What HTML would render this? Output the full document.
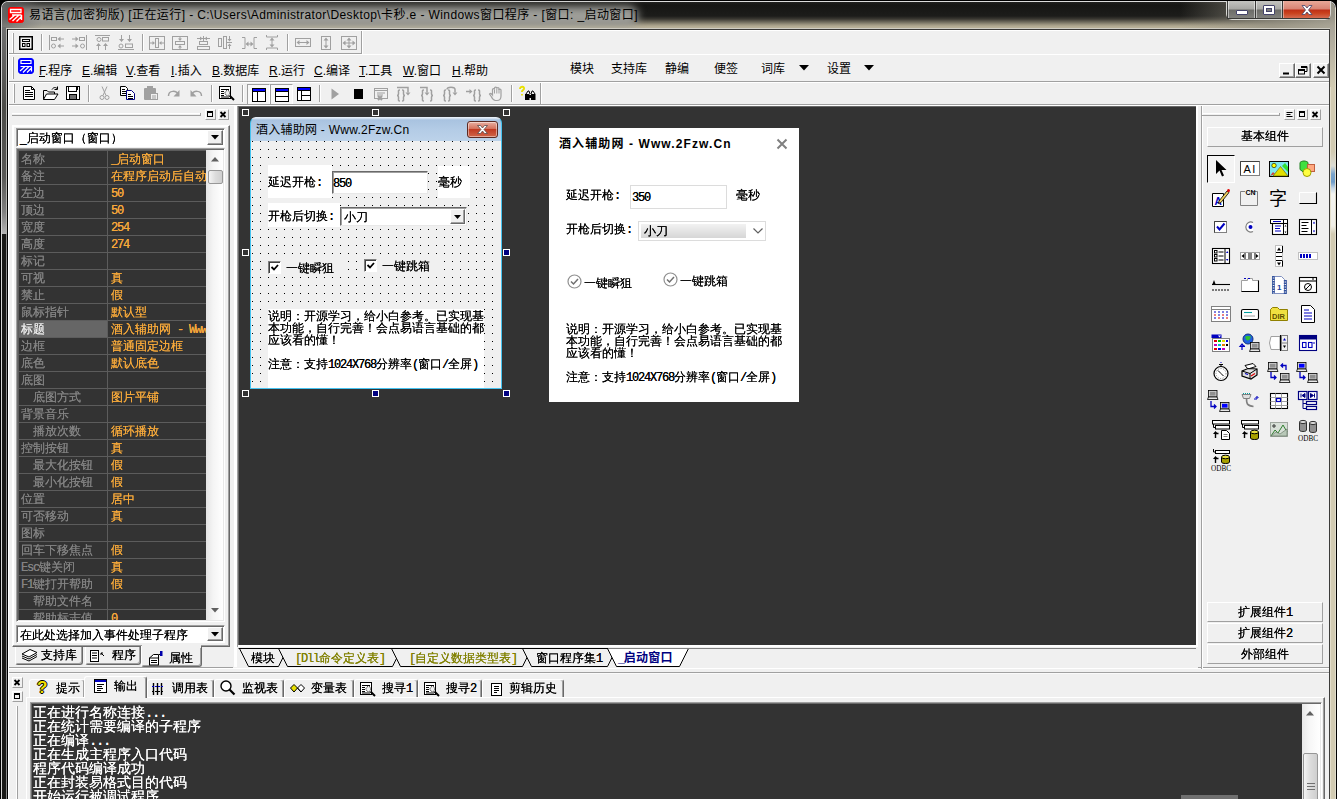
<!DOCTYPE html><html lang="zh"><head><meta charset="utf-8"><title>易语言</title><style>
*{box-sizing:border-box;margin:0;padding:0}
html,body{width:1337px;height:799px;overflow:hidden;background:#f0f0f0}
body{position:relative;font-family:"Liberation Sans","WenQuanYi Zen Hei","Noto Sans CJK SC",sans-serif;font-size:12px;color:#000;line-height:1}
.a{position:absolute}
.ui{font-family:"Liberation Sans","Noto Sans CJK SC",sans-serif}
.ss{font-family:"Liberation Sans","WenQuanYi Zen Hei","Noto Sans CJK SC",sans-serif}
.mono{font-family:"Liberation Sans","WenQuanYi Zen Hei","Noto Sans CJK SC",sans-serif;text-shadow:0 0 0 currentColor}
.ss{text-shadow:0 0 0 currentColor}
.l{font-family:"Liberation Mono",monospace;letter-spacing:-1.2px}
.raised{border:1px solid;border-color:#fff #a0a0a0 #a0a0a0 #fff;background:#f0f0f0}
.raised2{border:1px solid;border-color:#fff #696969 #696969 #fff;box-shadow:inset -1px -1px 0 #a0a0a0;background:#f0f0f0}
.sunken{border:1px solid;border-color:#a0a0a0 #fff #fff #a0a0a0}
.sunken2{border:1px solid;border-color:#a0a0a0 #fff #fff #a0a0a0;box-shadow:inset 1px 1px 0 #696969}
.hl{background:#a0a0a0;height:1px}
.wl{background:#fff;height:1px}
.vl{background:#a0a0a0;width:1px}
.vw{background:#fff;width:1px}
.t{white-space:nowrap;line-height:14px;height:14px}
svg{position:absolute;overflow:visible}
</style></head><body>
<div class="a " style="left:0px;top:0px;width:1337px;height:799px;background:#000"></div>
<div class="a " style="left:0px;top:0px;width:1337px;height:40px;background:#000;border-radius:8px 8px 0 0"></div>
<div class="a " style="left:1px;top:1px;width:1335px;height:40px;background:#dcdcdc;border-radius:7px 7px 0 0"></div>
<div class="a " style="left:2px;top:2px;width:1333px;height:40px;border-radius:6px 6px 0 0;background:linear-gradient(to bottom,#20201e 0,#161614 3px,#1c1c1a 14px,#3a3832 17px,#6e6a5c 20px,#a39c86 23px,#b8b098 25px,#b8b098 26px)"></div>
<div class="a " style="left:12px;top:6px;width:626px;height:21px;background:#9e9e99;border-radius:9px;filter:blur(4px)"></div>
<div class="a " style="left:2px;top:2px;width:40px;height:26px;background:linear-gradient(to right,rgba(112,112,112,.9),rgba(112,112,112,0));border-radius:6px 0 0 0"></div>
<div class="a " style="left:1180px;top:2px;width:155px;height:26px;background:linear-gradient(to right,rgba(120,118,108,0),rgba(150,146,132,.75) 60%,rgba(168,164,150,.9));border-radius:0 6px 0 0"></div>
<div class="a " style="left:6px;top:28px;width:1325px;height:1px;background:#cfcdc4"></div>
<div class="a " style="left:7px;top:29px;width:1323px;height:1px;background:#3c3c3a"></div>
<div class="a " style="left:0px;top:8px;width:2px;height:791px;background:linear-gradient(to right,#000 0,#000 1px,#d4d4d4 1px)"></div>
<div class="a " style="left:2px;top:29px;width:6px;height:770px;background:linear-gradient(to right,#4c4c48 0,#4c4c48 4px,#b4b4b0 4px,#b4b4b0 5px,#000 5px)"></div>
<div class="a " style="left:2px;top:27px;width:4px;height:207px;background:linear-gradient(to bottom,#707070 0,#4c4c48 80px,#585856 150px,#808080 185px,#b4b4b4 207px)"></div>
<div class="a " style="left:2px;top:234px;width:4px;height:565px;background:#181816"></div>
<div class="a " style="left:6px;top:234px;width:1px;height:565px;background:#8c8c8c"></div>
<div class="a " style="left:8px;top:30px;width:1px;height:769px;background:#fff;z-index:5"></div>
<div class="a " style="left:1335px;top:8px;width:2px;height:791px;background:linear-gradient(to right,#e0dccc 0,#e0dccc 1px,#000 1px)"></div>
<div class="a " style="left:1329px;top:29px;width:6px;height:770px;background:linear-gradient(to right,#3c3c3a 0,#3c3c3a 1px,#e4dfcc 1px,#e4dfcc 2px,#d2cbb2 2px)"></div>
<div class="a " style="left:1330px;top:27px;width:5px;height:60px;background:linear-gradient(to bottom,#a8a498,#d2cbb2)"></div>
<svg style="left:8px;top:7px" width="16" height="16" viewBox="0 0 16 16"><rect x="0.500" y="0.500" width="15" height="15" rx="2" fill="#f00" stroke="#f00"/><path d="M2.500 2.500h10.500v3h-10.500z" stroke="#fff" stroke-width="1.300" fill="none"/><path d="M4 8h9.500M1.500 12.500l6-5M4.500 14l6-5.500M8.500 14.500l5-5M13.500 8v5" stroke="#fff" stroke-width="1.400" fill="none"/></svg>
<div class="a t ui" style="left:29px;top:7px;font-size:12px;line-height:16px;height:16px;color:#000;letter-spacing:0.40px">易语言(加密狗版) [正在运行] - C:\Users\Administrator\Desktop\卡秒.e - Windows窗口程序 - [窗口: _启动窗口]</div>
<div class="a " style="left:1226px;top:1px;width:105px;height:19px;border:1px solid #d8d8d4;border-top:none;border-radius:0 0 6px 6px;background:#3a3a38"></div>
<div class="a " style="left:1227px;top:1px;width:103px;height:18px;border-radius:0 0 5px 5px;background:linear-gradient(to bottom,#c4c4c0 0,#a8a8a4 8px,#6c6c68 9px,#80807c 17px)"></div>
<div class="a " style="left:1283px;top:1px;width:47px;height:18px;border-radius:0 0 5px 0;background:linear-gradient(to bottom,#e8a898 0,#d88474 8px,#be3018 9px,#c8401c 12px,#d46a50 17px)"></div>
<div class="a " style="left:1227px;top:1px;width:1px;height:18px;background:#3a3a38"></div>
<div class="a " style="left:1228px;top:1px;width:1px;height:17px;background:rgba(255,255,255,.5)"></div>
<div class="a " style="left:1254px;top:1px;width:1px;height:18px;background:rgba(255,255,255,.5)"></div>
<div class="a " style="left:1255px;top:1px;width:1px;height:18px;background:#3a3a38"></div>
<div class="a " style="left:1256px;top:1px;width:1px;height:18px;background:rgba(255,255,255,.5)"></div>
<div class="a " style="left:1281px;top:1px;width:1px;height:18px;background:rgba(255,255,255,.5)"></div>
<div class="a " style="left:1282px;top:1px;width:1px;height:18px;background:#3a3a38"></div>
<div class="a " style="left:1283px;top:1px;width:1px;height:18px;background:rgba(255,255,255,.4)"></div>
<div class="a " style="left:1227px;top:18px;width:103px;height:1px;background:#3a3a38;border-radius:0 0 5px 5px"></div>
<div class="a " style="left:1236px;top:10px;width:12px;height:5px;background:#fff;border:1px solid #44446a;border-radius:1px"></div>
<div class="a " style="left:1263px;top:5px;width:12px;height:10px;background:#fff;border:1px solid #44446a;border-radius:1px"></div>
<div class="a " style="left:1266px;top:8px;width:6px;height:4px;background:#80807c;border:1px solid #44446a"></div>
<svg style="left:1301px;top:5px" width="12" height="10" viewBox="0 0 12 10"><path d="M1 0.500h3l2 2.500 2-2.500h3l-3.500 4.500 3.500 4.500h-3l-2-2.500-2 2.500h-3l3.500-4.500z" fill="#fff" stroke="#44446a" stroke-width="0.800"/></svg>
<div class="a " style="left:8px;top:30px;width:1321px;height:769px;background:#f0f0f0"></div>
<div class="a " style="left:8px;top:30px;width:1321px;height:1px;background:#fff"></div>
<div class="a " style="left:8px;top:53px;width:354px;height:1px;background:#a0a0a0"></div>
<div class="a " style="left:8px;top:54px;width:1321px;height:1px;background:#fff"></div>
<div class="a " style="left:361px;top:31px;width:1px;height:23px;background:#a0a0a0"></div>
<div class="a " style="left:362px;top:31px;width:1px;height:23px;background:#fff"></div>
<div class="a " style="left:12px;top:33px;width:1px;height:20px;background:#fff"></div>
<div class="a " style="left:13px;top:33px;width:1px;height:20px;background:#a0a0a0"></div>
<svg style="left:19px;top:36px" width="14" height="14" viewBox="0 0 14 14"><rect x="0.750" y="0.750" width="12.500" height="12.500" fill="none" stroke="#000" stroke-width="1.500"/><rect x="3.5" y="3.5" width="7" height="2" fill="none" stroke="#000"/><rect x="3.5" y="7.5" width="2.5" height="3" fill="none" stroke="#000"/><rect x="8" y="7.5" width="2.5" height="3" fill="none" stroke="#000"/></svg>
<div class="a " style="left:41px;top:34px;width:1px;height:17px;background:#a0a0a0"></div>
<div class="a " style="left:42px;top:34px;width:1px;height:17px;background:#fff"></div>
<svg style="left:48px;top:34px" width="18" height="18" viewBox="0 0 18 18"><g fill="none" stroke="#a0a0a0" stroke-width="1"><path d="M1.500 1v15"/><rect x="3.500" y="3.500" width="5" height="3"/><circle cx="5.500" cy="12" r="2"/><path d="M11 5h5M11 12h5"/><path fill="#a0a0a0" stroke="none" d="M9.500 5l3-2.500v5zM9.500 12l3-2.500v5z"/></g></svg>
<svg style="left:70px;top:34px" width="18" height="18" viewBox="0 0 18 18"><g fill="none" stroke="#a0a0a0" stroke-width="1"><path d="M16.500 1v15"/><rect x="9.500" y="3.500" width="5" height="3"/><circle cx="12.500" cy="12" r="2"/><path d="M2 5h5M2 12h5"/><path fill="#a0a0a0" stroke="none" d="M8.500 5l-3-2.500v5zM8.500 12l-3-2.500v5z"/></g></svg>
<svg style="left:94px;top:34px" width="18" height="18" viewBox="0 0 18 18"><g fill="none" stroke="#a0a0a0" stroke-width="1"><path d="M1 1.500h15"/><circle cx="5" cy="5.500" r="2"/><rect x="8.500" y="3.500" width="6" height="3.500"/><path d="M4.500 16v-5M11.500 16v-5"/><path fill="#a0a0a0" stroke="none" d="M4.500 9l-2.500 3h5zM11.500 9l-2.500 3h5z"/></g></svg>
<svg style="left:117px;top:34px" width="18" height="18" viewBox="0 0 18 18"><g fill="none" stroke="#a0a0a0" stroke-width="1"><path d="M1 15.500h16"/><circle cx="4" cy="12" r="2"/><rect x="8.500" y="10" width="7" height="3.500"/><path d="M4.500 1v5M12.500 1v5"/><path fill="#a0a0a0" stroke="none" d="M4.500 8l-2.500-3h5zM12.500 8l-2.500-3h5z"/></g></svg>
<div class="a " style="left:142px;top:34px;width:1px;height:17px;background:#a0a0a0"></div>
<div class="a " style="left:143px;top:34px;width:1px;height:17px;background:#fff"></div>
<svg style="left:148px;top:34px" width="18" height="18" viewBox="0 0 18 18"><g fill="none" stroke="#a0a0a0" stroke-width="1"><rect x="1.500" y="2.500" width="15" height="13"/><rect x="7.500" y="4.500" width="3" height="9"/><path d="M2 9h3M16 9h-3"/><path fill="#a0a0a0" stroke="none" d="M7 9l-2.500-2v4zM11 9l2.500-2v4z"/></g></svg>
<svg style="left:171px;top:34px" width="18" height="18" viewBox="0 0 18 18"><g fill="none" stroke="#a0a0a0" stroke-width="1"><rect x="1.500" y="2.500" width="15" height="13"/><rect x="4.500" y="7.500" width="9" height="3"/><path d="M9 3v2M9 15v-2"/><path fill="#a0a0a0" stroke="none" d="M9 7l-2-2.500h4zM9 11l-2 2.500h4z"/></g></svg>
<svg style="left:195px;top:34px" width="18" height="18" viewBox="0 0 18 18"><g fill="none" stroke="#a0a0a0" stroke-width="1"><path d="M2 4.500h13M8.500 2v5"/><path fill="#a0a0a0" stroke="none" d="M7.500 4.500l-2.500-2v4zM9.500 4.500l2.500-2v4z"/><rect x="4.500" y="7.500" width="8" height="3"/><rect x="2.500" y="12.500" width="12" height="3"/></g></svg>
<svg style="left:217px;top:34px" width="18" height="18" viewBox="0 0 18 18"><g fill="none" stroke="#a0a0a0" stroke-width="1"><rect x="1.500" y="4.500" width="3" height="8"/><rect x="6.500" y="2.500" width="3" height="12"/><path d="M10 8.500h5M12.500 2v4M12.500 15v-4"/><path fill="#a0a0a0" stroke="none" d="M12.500 7.500l-2-2.500h4zM12.500 9.500l-2 2.500h4z"/></g></svg>
<svg style="left:241px;top:34px" width="18" height="18" viewBox="0 0 18 18"><g fill="none" stroke="#a0a0a0" stroke-width="1"><path d="M1 3.500h3v11h-3M16 3.500h-3v11h3M6 10h5"/><path fill="#a0a0a0" stroke="none" d="M4.500 10l3-2.500v5zM12.500 10l-3-2.500v5z"/></g></svg>
<svg style="left:264px;top:34px" width="18" height="18" viewBox="0 0 18 18"><g fill="none" stroke="#a0a0a0" stroke-width="1"><path d="M2.500 1v2h11v-2M2.500 16v-2h11v2M8 5v7"/><path fill="#a0a0a0" stroke="none" d="M8 3.500l-2.500 3h5zM8 13.500l-2.500-3h5z"/></g></svg>
<div class="a " style="left:287px;top:34px;width:1px;height:17px;background:#a0a0a0"></div>
<div class="a " style="left:288px;top:34px;width:1px;height:17px;background:#fff"></div>
<svg style="left:294px;top:34px" width="18" height="18" viewBox="0 0 18 18"><g fill="none" stroke="#a0a0a0" stroke-width="1"><rect x="1.500" y="4.500" width="15" height="8"/><path d="M5 8.500h8"/><path fill="#a0a0a0" stroke="none" d="M2.500 8.500l3-2.500v5zM15.500 8.500l-3-2.500v5z"/></g></svg>
<svg style="left:317px;top:34px" width="18" height="18" viewBox="0 0 18 18"><g fill="none" stroke="#a0a0a0" stroke-width="1"><rect x="4.500" y="2.500" width="9" height="13"/><path d="M9 6v6"/><path fill="#a0a0a0" stroke="none" d="M9 3.500l-2.500 3h5zM9 14.500l-2.500-3h5z"/></g></svg>
<svg style="left:340px;top:34px" width="18" height="18" viewBox="0 0 18 18"><g fill="none" stroke="#a0a0a0" stroke-width="1"><rect x="1.500" y="2.500" width="15" height="13"/><path d="M5 9h8M9 5v8"/><path fill="#a0a0a0" stroke="none" d="M2.500 9l3-2.500v5zM15.500 9l-3-2.500v5zM9 3.500l-2.500 3h5zM9 14.500l-2.500-3h5z"/></g></svg>
<div class="a " style="left:8px;top:81px;width:1321px;height:1px;background:#a0a0a0"></div>
<div class="a " style="left:8px;top:82px;width:1321px;height:1px;background:#fff"></div>
<div class="a " style="left:12px;top:57px;width:1px;height:22px;background:#fff"></div>
<div class="a " style="left:13px;top:57px;width:1px;height:22px;background:#a0a0a0"></div>
<svg style="left:18px;top:58px" width="16" height="16" viewBox="0 0 16 16"><rect x="0.500" y="0.500" width="15" height="15" rx="2.500" fill="#00f" stroke="#00f"/><path d="M3 2.500h10v3h-10zM2.500 8.500h11M2 13l5-4.500M5 14.500l6-6M9 14.500l4.500-4.500M13.500 8.500v5" stroke="#fff" stroke-width="1.200" fill="none"/></svg>
<div class="a t ui" style="left:39px;top:63px;font-size:12px;line-height:16px;height:16px"><u>F</u>.程序</div>
<div class="a t ui" style="left:82px;top:63px;font-size:12px;line-height:16px;height:16px"><u>E</u>.编辑</div>
<div class="a t ui" style="left:126px;top:63px;font-size:12px;line-height:16px;height:16px"><u>V</u>.查看</div>
<div class="a t ui" style="left:171px;top:63px;font-size:12px;line-height:16px;height:16px"><u>I</u>.插入</div>
<div class="a t ui" style="left:212px;top:63px;font-size:12px;line-height:16px;height:16px"><u>B</u>.数据库</div>
<div class="a t ui" style="left:269px;top:63px;font-size:12px;line-height:16px;height:16px"><u>R</u>.运行</div>
<div class="a t ui" style="left:314px;top:63px;font-size:12px;line-height:16px;height:16px"><u>C</u>.编译</div>
<div class="a t ui" style="left:359px;top:63px;font-size:12px;line-height:16px;height:16px"><u>T</u>.工具</div>
<div class="a t ui" style="left:403px;top:63px;font-size:12px;line-height:16px;height:16px"><u>W</u>.窗口</div>
<div class="a t ui" style="left:452px;top:63px;font-size:12px;line-height:16px;height:16px"><u>H</u>.帮助</div>
<div class="a t ui" style="left:570px;top:61px;font-size:12px;line-height:16px;height:16px">模块</div>
<div class="a t ui" style="left:611px;top:61px;font-size:12px;line-height:16px;height:16px">支持库</div>
<div class="a t ui" style="left:665px;top:61px;font-size:12px;line-height:16px;height:16px">静编</div>
<div class="a t ui" style="left:714px;top:61px;font-size:12px;line-height:16px;height:16px">便签</div>
<div class="a t ui" style="left:761px;top:61px;font-size:12px;line-height:16px;height:16px">词库</div>
<div class="a t ui" style="left:827px;top:61px;font-size:12px;line-height:16px;height:16px">设置</div>
<svg style="left:799px;top:65px" width="10" height="6" viewBox="0 0 10 6"><path d="M0 0h10l-5 5.500z" fill="#000"/></svg>
<svg style="left:864px;top:65px" width="10" height="6" viewBox="0 0 10 6"><path d="M0 0h10l-5 5.500z" fill="#000"/></svg>
<div class="a raised2" style="left:1279px;top:63px;width:16px;height:15px;"></div>
<svg style="left:1279px;top:63px" width="16" height="15" viewBox="0 0 16 15"><path d="M4 10.500h6" stroke="#000" stroke-width="2"/></svg>
<div class="a raised2" style="left:1295px;top:63px;width:16px;height:15px;"></div>
<svg style="left:1295px;top:63px" width="16" height="15" viewBox="0 0 16 15"><path d="M6 3.500h6v5h-2M6 4.500h6" stroke="#000" fill="none"/><rect x="3.500" y="6.500" width="6" height="4.500" fill="#f0f0f0" stroke="#000"/><path d="M3.500 7.500h6" stroke="#000"/></svg>
<div class="a raised2" style="left:1313px;top:63px;width:16px;height:15px;"></div>
<svg style="left:1313px;top:63px" width="16" height="15" viewBox="0 0 16 15"><path d="M4.500 3.500l7 7M11.500 3.500l-7 7" stroke="#000" stroke-width="2"/></svg>
<div class="a " style="left:8px;top:104px;width:1321px;height:1px;background:#a0a0a0"></div>
<div class="a " style="left:8px;top:105px;width:1321px;height:1px;background:#fff"></div>
<div class="a " style="left:540px;top:83px;width:1px;height:22px;background:#a0a0a0"></div>
<div class="a " style="left:541px;top:83px;width:1px;height:22px;background:#fff"></div>
<div class="a " style="left:13px;top:84px;width:1px;height:19px;background:#fff"></div>
<div class="a " style="left:14px;top:84px;width:1px;height:19px;background:#a0a0a0"></div>
<svg style="left:23px;top:86px" width="13" height="15" viewBox="0 0 13 15"><path d="M0.500 0.500h8l3 3v10h-11z" fill="#fff" stroke="#000"/><path d="M8.500 0.500v3h3" fill="none" stroke="#000" stroke-width="1"/><path d="M2 4.500h5M2 6.500h8M2 8.500h8M2 10.500h8" fill="none" stroke="#000" stroke-width="1"/></svg>
<svg style="left:43px;top:86px" width="16" height="15" viewBox="0 0 16 15"><path d="M0.500 13.500v-9h3.500l1.500 1.500h6v2.500" fill="none" stroke="#000" stroke-width="1"/><path d="M0.500 13.500l3-5.500h11.500l-3.500 5.500z" fill="#fff" stroke="#000"/><path d="M9 3.500c1.500-2.500 4-2.500 5.500-0.500M14.500 0.500v3h-3" fill="none" stroke="#000" stroke-width="1"/></svg>
<svg style="left:66px;top:86px" width="15" height="15" viewBox="0 0 15 15"><rect x="0.500" y="0.500" width="13" height="13" fill="#fff" stroke="#000"/><rect x="2.500" y="0.500" width="8" height="5" fill="none" stroke="#000" stroke-width="1"/><rect x="3.500" y="8.500" width="7" height="5" fill="#707070" stroke="#000"/><path d="M11.500 1v3" fill="none" stroke="#000" stroke-width="1"/></svg>
<div class="a " style="left:88px;top:85px;width:1px;height:17px;background:#a0a0a0"></div>
<div class="a " style="left:89px;top:85px;width:1px;height:17px;background:#fff"></div>
<svg style="left:99px;top:86px" width="11" height="15" viewBox="0 0 11 15"><path d="M3 0.500l4 9M8 0.500l-4 9" stroke="#a0a0a0" fill="none"/><circle cx="3" cy="11.500" r="2" fill="none" stroke="#a0a0a0"/><circle cx="8" cy="11.500" r="2" fill="none" stroke="#a0a0a0"/></svg>
<svg style="left:120px;top:86px" width="16" height="15" viewBox="0 0 16 15"><path d="M0.500 0.500h5l2 2v7h-7z" fill="#fff" stroke="#000"/><path d="M2 3.500h3M2 5.500h4M2 7.500h4" fill="none" stroke="#000" stroke-width="1"/><path d="M6.500 4.500h5l3 3v6h-8z" fill="#fff" stroke="#000080"/><path d="M8 8.500h3M8 10.500h5M8 12.500h5" stroke="#000" fill="none"/></svg>
<svg style="left:143px;top:86px" width="16" height="15" viewBox="0 0 16 15"><rect x="1" y="2" width="12" height="12" rx="1" fill="#a0a0a0"/><rect x="4.500" y="0.500" width="5" height="3" fill="#a0a0a0" stroke="#a0a0a0"/><rect x="7.500" y="7.500" width="7" height="6" fill="#f0f0f0" stroke="#a0a0a0"/><path d="M9 10h4M9 12h4" stroke="#a0a0a0"/></svg>
<svg style="left:167px;top:88px" width="14" height="11" viewBox="0 0 14 11"><path d="M1.500 8c0-6 8-6 10-1" fill="none" stroke="#a0a0a0" stroke-width="1.500"/><path d="M12.500 2v6.500h-6z" fill="#a0a0a0"/></svg>
<svg style="left:189px;top:88px" width="14" height="11" viewBox="0 0 14 11"><path d="M12.500 8c0-6-8-6-10-1" fill="none" stroke="#a0a0a0" stroke-width="1.500"/><path d="M1.500 2v6.500h6z" fill="#a0a0a0"/></svg>
<div class="a " style="left:211px;top:85px;width:1px;height:17px;background:#a0a0a0"></div>
<div class="a " style="left:212px;top:85px;width:1px;height:17px;background:#fff"></div>
<svg style="left:219px;top:86px" width="17" height="15" viewBox="0 0 17 15"><rect x="0.500" y="0.500" width="11" height="12" fill="#fff" stroke="#000"/><path d="M2 3.500h8M2 5.500h3M2 7.500h3M2 9.500h3M2 11h8" fill="none" stroke="#000" stroke-width="1"/><circle cx="8.500" cy="7" r="2.500" fill="#f0f0f0" stroke="#000" stroke-dasharray="1 1"/><path d="M10.500 9.500l4.500 4.500" stroke="#000" stroke-width="2"/></svg>
<div class="a " style="left:242px;top:85px;width:1px;height:17px;background:#a0a0a0"></div>
<div class="a " style="left:243px;top:85px;width:1px;height:17px;background:#fff"></div>
<div class="a sunken" style="left:247px;top:84px;width:23px;height:21px;background:#f8f8f8"></div>
<div class="a sunken" style="left:270px;top:84px;width:23px;height:21px;background:#f8f8f8"></div>
<svg style="left:252px;top:88px" width="14" height="14" viewBox="0 0 14 14"><rect x="0.500" y="0.500" width="13" height="13" fill="#fff" stroke="#000"/><rect x="1" y="1" width="12" height="2" fill="#00f"/><path d="M1 3.500h12" stroke="#000"/><path d="M5.500 3.500v10" stroke="#000"/></svg>
<svg style="left:275px;top:88px" width="14" height="14" viewBox="0 0 14 14"><rect x="0.500" y="0.500" width="13" height="13" fill="#fff" stroke="#000"/><rect x="1" y="1" width="12" height="2" fill="#00f"/><path d="M1 3.500h12" stroke="#000"/><path d="M1 8.500h12" stroke="#000"/></svg>
<svg style="left:297px;top:87px" width="14" height="14" viewBox="0 0 14 14"><rect x="0.500" y="0.500" width="13" height="13" fill="#fff" stroke="#000"/><rect x="1" y="1" width="12" height="2" fill="#00f"/><path d="M1 3.500h12" stroke="#000"/><path d="M4.500 3.500v10M4.500 8.500h9" stroke="#000"/></svg>
<div class="a " style="left:319px;top:85px;width:1px;height:17px;background:#a0a0a0"></div>
<div class="a " style="left:320px;top:85px;width:1px;height:17px;background:#fff"></div>
<svg style="left:331px;top:88px" width="9" height="12" viewBox="0 0 9 12"><path d="M0.500 0.500l7.500 5.500-7.500 5.500z" fill="#a0a0a0"/></svg>
<div class="a " style="left:354px;top:89px;width:9px;height:10px;background:#000"></div>
<svg style="left:373px;top:87px" width="16" height="14" viewBox="0 0 16 14"><rect x="1.500" y="1.500" width="13" height="10" fill="none" stroke="#a0a0a0"/><path d="M1.500 3.500h13M4 6h8M4 8h6" stroke="#a0a0a0"/><path d="M5 9l4 4M9 9l-4 4" stroke="#a0a0a0" stroke-width="2"/></svg>
<svg style="left:396px;top:86px" width="16" height="15" viewBox="0 0 16 15"><g fill="none" stroke="#a0a0a0" stroke-width="1.500"><path d="M4 4c-2 0-1.500 1-1.500 2.500v1.500c0 1-0.500 1.500-1.500 1.500 1 0 1.500 0.500 1.500 1.500v1.500c0 1.500-0.500 2.500 1.500 2.500"/><path d="M6 4c2 0 1.500 1 1.500 2.500v1.500c0 1 0.500 1.500 1.500 1.500-1 0-1.500 0.500-1.500 1.500v1.500c0 1.500 0.500 2.500-1.500 2.500"/><path d="M1 1.500h11v5"/></g><g fill="#a0a0a0"><path d="M9.500 6.500h5l-2.500 3z"/></g></svg>
<svg style="left:420px;top:86px" width="16" height="15" viewBox="0 0 16 15"><g fill="none" stroke="#a0a0a0" stroke-width="1.500"><path d="M4 4c-2 0-1.500 1-1.500 2.500v1.500c0 1-0.500 1.500-1.500 1.500 1 0 1.500 0.500 1.500 1.500v1.500c0 1.500-0.500 2.500 1.500 2.500"/><path d="M10 4c2 0 1.500 1 1.500 2.500v1.500c0 1 0.500 1.500 1.500 1.500-1 0-1.500 0.500-1.500 1.500v1.500c0 1.500 0.500 2.500-1.500 2.500"/><path d="M0 1.500h7v5"/></g><g fill="#a0a0a0"><path d="M4.500 6.500h5l-2.500 3z"/></g></svg>
<svg style="left:442px;top:86px" width="16" height="15" viewBox="0 0 16 15"><g fill="none" stroke="#a0a0a0" stroke-width="1.500"><path d="M4 4c-2 0-1.500 1-1.500 2.500v1.500c0 1-0.500 1.500-1.500 1.500 1 0 1.500 0.500 1.500 1.500v1.500c0 1.500-0.500 2.500 1.500 2.500"/><path d="M6 4c2 0 1.500 1 1.500 2.500v1.500c0 1 0.500 1.500 1.500 1.500-1 0-1.500 0.500-1.500 1.500v1.500c0 1.500 0.500 2.500-1.500 2.500"/><path d="M5 3.500c0-3 8-3 8 0v3"/></g><g fill="#a0a0a0"><path d="M10.500 6.500h5l-2.500 3z"/></g></svg>
<svg style="left:466px;top:86px" width="16" height="15" viewBox="0 0 16 15"><g fill="none" stroke="#a0a0a0" stroke-width="1.500"><path d="M10 4c-2 0-1.500 1-1.500 2.500v1.500c0 1-0.500 1.500-1.500 1.500 1 0 1.500 0.500 1.500 1.500v1.500c0 1.500-0.500 2.500 1.500 2.500"/><path d="M12 4c2 0 1.500 1 1.500 2.500v1.500c0 1 0.500 1.500 1.500 1.500-1 0-1.500 0.500-1.500 1.500v1.500c0 1.500 0.500 2.500-1.500 2.500"/><path d="M0 5.500h4"/></g><g fill="#a0a0a0"><path d="M3.500 3l3 2.500-3 2.500z"/></g></svg>
<svg style="left:489px;top:86px" width="14" height="15" viewBox="0 0 14 15"><path d="M3.500 8.500v-5c0-1.300 2-1.300 2 0v-1.500c0-1.300 2.300-1.300 2.300 0v0.500c0-1.300 2.200-1.300 2.200 0v1.500c0-1.200 2-1.200 2 0v6c0 3-1.500 4.500-4 4.500h-1.500c-2 0-3-1.500-4.300-4l-1.700-2.500c0.800-1 2-0.500 3 1z" fill="none" stroke="#a0a0a0" stroke-width="1.200"/><path d="M5.500 3.500v4M7.800 2.500v5M10 3v4.500" stroke="#a0a0a0" fill="none"/></svg>
<div class="a " style="left:511px;top:85px;width:1px;height:17px;background:#a0a0a0"></div>
<div class="a " style="left:512px;top:85px;width:1px;height:17px;background:#fff"></div>
<svg style="left:519px;top:86px" width="17" height="15" viewBox="0 0 17 15"><path d="M1 3c0-3 5-3 4 0l-2 2v1M3 8v1.500" stroke="#e8e000" stroke-width="1.800" fill="none"/><path d="M7 8l2-3h1l1 3M12 8l1-3h1l2 3" stroke="#000" fill="none"/><rect x="6" y="8" width="4.500" height="6" fill="#000"/><rect x="12" y="8" width="4.500" height="6" fill="#000"/><rect x="10" y="9" width="2.500" height="3" fill="#000"/></svg>
<div class="a " style="left:12px;top:113px;width:189px;height:1px;background:#fff"></div>
<div class="a " style="left:12px;top:115px;width:189px;height:1px;background:#a0a0a0"></div>
<div class="a " style="left:200px;top:113px;width:1px;height:3px;background:#a0a0a0"></div>
<div class="a raised" style="left:205px;top:109px;width:11px;height:11px;"></div>
<svg style="left:205px;top:109px" width="11" height="11" viewBox="0 0 11 11"><rect x="2.500" y="2.500" width="5" height="5" fill="none" stroke="#000"/><rect x="2" y="2" width="6" height="2" fill="#000"/></svg>
<div class="a raised" style="left:218px;top:109px;width:11px;height:11px;"></div>
<svg style="left:218px;top:109px" width="11" height="11" viewBox="0 0 11 11"><path d="M2.500 3l5 5M7.500 3l-5 5" stroke="#000" stroke-width="1.800"/></svg>
<div class="a " style="left:12px;top:125px;width:218px;height:522px;border:1px solid;border-color:#fff #696969 #696969 #fff;box-shadow:inset -1px -1px 0 #a0a0a0,inset 1px 1px 0 #fff"></div>
<div class="a " style="left:234px;top:106px;width:3px;height:561px;background:#fff"></div>
<div class="a sunken2" style="left:16px;top:128px;width:209px;height:19px;background:#fff"></div>
<div class="a raised2" style="left:207px;top:130px;width:16px;height:15px;"></div>
<svg style="left:211px;top:135px" width="8" height="5" viewBox="0 0 8 5"><path d="M0 0h8l-4 4.500z" fill="#000"/></svg>
<div class="a t ss" style="left:20px;top:131px;">_启动窗口（窗口）</div>
<div class="a " style="left:16px;top:148px;width:209px;height:474px;background:#333;border:1px solid;border-color:#a0a0a0 #fff #fff #a0a0a0;box-shadow:inset 1px 1px 0 #696969,inset -1px -1px 0 #e8e8e8"></div>
<div class="a" style="left:18px;top:150px;width:188px;height:470px;overflow:hidden;background:#333">
<div class="a" style="left:0;top:0px;width:189px;height:1px;background:#5c5c5c"></div>
<div class="a t mono" style="left:1px;top:1px;width:88px;height:16px;line-height:16px;padding-left:2px;color:#828282;">名称</div>
<div class="a t mono" style="left:90px;top:1px;width:99px;height:16px;line-height:16px;padding-left:3px;color:#f5a83a;overflow:hidden;width:98px"><span class="l">_</span>启动窗口</div>
<div class="a" style="left:0;top:17px;width:189px;height:1px;background:#5c5c5c"></div>
<div class="a t mono" style="left:1px;top:18px;width:88px;height:16px;line-height:16px;padding-left:2px;color:#828282;">备注</div>
<div class="a t mono" style="left:90px;top:18px;width:99px;height:16px;line-height:16px;padding-left:3px;color:#f5a83a;overflow:hidden;width:98px">在程序启动后自动调入本窗口</div>
<div class="a" style="left:0;top:34px;width:189px;height:1px;background:#5c5c5c"></div>
<div class="a t mono" style="left:1px;top:35px;width:88px;height:16px;line-height:16px;padding-left:2px;color:#828282;">左边</div>
<div class="a t mono" style="left:90px;top:35px;width:99px;height:16px;line-height:16px;padding-left:3px;color:#f5a83a;overflow:hidden;width:98px"><span class="l">50</span></div>
<div class="a" style="left:0;top:51px;width:189px;height:1px;background:#5c5c5c"></div>
<div class="a t mono" style="left:1px;top:52px;width:88px;height:16px;line-height:16px;padding-left:2px;color:#828282;">顶边</div>
<div class="a t mono" style="left:90px;top:52px;width:99px;height:16px;line-height:16px;padding-left:3px;color:#f5a83a;overflow:hidden;width:98px"><span class="l">50</span></div>
<div class="a" style="left:0;top:68px;width:189px;height:1px;background:#5c5c5c"></div>
<div class="a t mono" style="left:1px;top:69px;width:88px;height:16px;line-height:16px;padding-left:2px;color:#828282;">宽度</div>
<div class="a t mono" style="left:90px;top:69px;width:99px;height:16px;line-height:16px;padding-left:3px;color:#f5a83a;overflow:hidden;width:98px"><span class="l">254</span></div>
<div class="a" style="left:0;top:85px;width:189px;height:1px;background:#5c5c5c"></div>
<div class="a t mono" style="left:1px;top:86px;width:88px;height:16px;line-height:16px;padding-left:2px;color:#828282;">高度</div>
<div class="a t mono" style="left:90px;top:86px;width:99px;height:16px;line-height:16px;padding-left:3px;color:#f5a83a;overflow:hidden;width:98px"><span class="l">274</span></div>
<div class="a" style="left:0;top:102px;width:189px;height:1px;background:#5c5c5c"></div>
<div class="a t mono" style="left:1px;top:103px;width:88px;height:16px;line-height:16px;padding-left:2px;color:#828282;">标记</div>
<div class="a t mono" style="left:90px;top:103px;width:99px;height:16px;line-height:16px;padding-left:3px;color:#f5a83a;overflow:hidden;width:98px"></div>
<div class="a" style="left:0;top:119px;width:189px;height:1px;background:#5c5c5c"></div>
<div class="a t mono" style="left:1px;top:120px;width:88px;height:16px;line-height:16px;padding-left:2px;color:#828282;">可视</div>
<div class="a t mono" style="left:90px;top:120px;width:99px;height:16px;line-height:16px;padding-left:3px;color:#f5a83a;overflow:hidden;width:98px">真</div>
<div class="a" style="left:0;top:136px;width:189px;height:1px;background:#5c5c5c"></div>
<div class="a t mono" style="left:1px;top:137px;width:88px;height:16px;line-height:16px;padding-left:2px;color:#828282;">禁止</div>
<div class="a t mono" style="left:90px;top:137px;width:99px;height:16px;line-height:16px;padding-left:3px;color:#f5a83a;overflow:hidden;width:98px">假</div>
<div class="a" style="left:0;top:153px;width:189px;height:1px;background:#5c5c5c"></div>
<div class="a t mono" style="left:1px;top:154px;width:88px;height:16px;line-height:16px;padding-left:2px;color:#828282;">鼠标指针</div>
<div class="a t mono" style="left:90px;top:154px;width:99px;height:16px;line-height:16px;padding-left:3px;color:#f5a83a;overflow:hidden;width:98px">默认型</div>
<div class="a" style="left:0;top:170px;width:189px;height:1px;background:#5c5c5c"></div>
<div class="a t mono" style="left:1px;top:171px;width:88px;height:16px;line-height:16px;padding-left:2px;background:#666;color:#e8e8e8;">标题</div>
<div class="a t mono" style="left:90px;top:171px;width:99px;height:16px;line-height:16px;padding-left:3px;color:#f5a83a;overflow:hidden;width:98px">酒入辅助网<span class="l"> - Www.2Fzw.Cn</span></div>
<div class="a" style="left:0;top:187px;width:189px;height:1px;background:#5c5c5c"></div>
<div class="a t mono" style="left:1px;top:188px;width:88px;height:16px;line-height:16px;padding-left:2px;color:#828282;">边框</div>
<div class="a t mono" style="left:90px;top:188px;width:99px;height:16px;line-height:16px;padding-left:3px;color:#f5a83a;overflow:hidden;width:98px">普通固定边框</div>
<div class="a" style="left:0;top:204px;width:189px;height:1px;background:#5c5c5c"></div>
<div class="a t mono" style="left:1px;top:205px;width:88px;height:16px;line-height:16px;padding-left:2px;color:#828282;">底色</div>
<div class="a t mono" style="left:90px;top:205px;width:99px;height:16px;line-height:16px;padding-left:3px;color:#f5a83a;overflow:hidden;width:98px">默认底色</div>
<div class="a" style="left:0;top:221px;width:189px;height:1px;background:#5c5c5c"></div>
<div class="a t mono" style="left:1px;top:222px;width:88px;height:16px;line-height:16px;padding-left:2px;color:#828282;">底图</div>
<div class="a t mono" style="left:90px;top:222px;width:99px;height:16px;line-height:16px;padding-left:3px;color:#f5a83a;overflow:hidden;width:98px"></div>
<div class="a" style="left:0;top:238px;width:189px;height:1px;background:#5c5c5c"></div>
<div class="a t mono" style="left:1px;top:239px;width:88px;height:16px;line-height:16px;padding-left:14px;color:#828282;">底图方式</div>
<div class="a t mono" style="left:90px;top:239px;width:99px;height:16px;line-height:16px;padding-left:3px;color:#f5a83a;overflow:hidden;width:98px">图片平铺</div>
<div class="a" style="left:0;top:255px;width:189px;height:1px;background:#5c5c5c"></div>
<div class="a t mono" style="left:1px;top:256px;width:88px;height:16px;line-height:16px;padding-left:2px;color:#828282;">背景音乐</div>
<div class="a t mono" style="left:90px;top:256px;width:99px;height:16px;line-height:16px;padding-left:3px;color:#f5a83a;overflow:hidden;width:98px"></div>
<div class="a" style="left:0;top:272px;width:189px;height:1px;background:#5c5c5c"></div>
<div class="a t mono" style="left:1px;top:273px;width:88px;height:16px;line-height:16px;padding-left:14px;color:#828282;">播放次数</div>
<div class="a t mono" style="left:90px;top:273px;width:99px;height:16px;line-height:16px;padding-left:3px;color:#f5a83a;overflow:hidden;width:98px">循环播放</div>
<div class="a" style="left:0;top:289px;width:189px;height:1px;background:#5c5c5c"></div>
<div class="a t mono" style="left:1px;top:290px;width:88px;height:16px;line-height:16px;padding-left:2px;color:#828282;">控制按钮</div>
<div class="a t mono" style="left:90px;top:290px;width:99px;height:16px;line-height:16px;padding-left:3px;color:#f5a83a;overflow:hidden;width:98px">真</div>
<div class="a" style="left:0;top:306px;width:189px;height:1px;background:#5c5c5c"></div>
<div class="a t mono" style="left:1px;top:307px;width:88px;height:16px;line-height:16px;padding-left:14px;color:#828282;">最大化按钮</div>
<div class="a t mono" style="left:90px;top:307px;width:99px;height:16px;line-height:16px;padding-left:3px;color:#f5a83a;overflow:hidden;width:98px">假</div>
<div class="a" style="left:0;top:323px;width:189px;height:1px;background:#5c5c5c"></div>
<div class="a t mono" style="left:1px;top:324px;width:88px;height:16px;line-height:16px;padding-left:14px;color:#828282;">最小化按钮</div>
<div class="a t mono" style="left:90px;top:324px;width:99px;height:16px;line-height:16px;padding-left:3px;color:#f5a83a;overflow:hidden;width:98px">假</div>
<div class="a" style="left:0;top:340px;width:189px;height:1px;background:#5c5c5c"></div>
<div class="a t mono" style="left:1px;top:341px;width:88px;height:16px;line-height:16px;padding-left:2px;color:#828282;">位置</div>
<div class="a t mono" style="left:90px;top:341px;width:99px;height:16px;line-height:16px;padding-left:3px;color:#f5a83a;overflow:hidden;width:98px">居中</div>
<div class="a" style="left:0;top:357px;width:189px;height:1px;background:#5c5c5c"></div>
<div class="a t mono" style="left:1px;top:358px;width:88px;height:16px;line-height:16px;padding-left:2px;color:#828282;">可否移动</div>
<div class="a t mono" style="left:90px;top:358px;width:99px;height:16px;line-height:16px;padding-left:3px;color:#f5a83a;overflow:hidden;width:98px">真</div>
<div class="a" style="left:0;top:374px;width:189px;height:1px;background:#5c5c5c"></div>
<div class="a t mono" style="left:1px;top:375px;width:88px;height:16px;line-height:16px;padding-left:2px;color:#828282;">图标</div>
<div class="a t mono" style="left:90px;top:375px;width:99px;height:16px;line-height:16px;padding-left:3px;color:#f5a83a;overflow:hidden;width:98px"></div>
<div class="a" style="left:0;top:391px;width:189px;height:1px;background:#5c5c5c"></div>
<div class="a t mono" style="left:1px;top:392px;width:88px;height:16px;line-height:16px;padding-left:2px;color:#828282;">回车下移焦点</div>
<div class="a t mono" style="left:90px;top:392px;width:99px;height:16px;line-height:16px;padding-left:3px;color:#f5a83a;overflow:hidden;width:98px">假</div>
<div class="a" style="left:0;top:408px;width:189px;height:1px;background:#5c5c5c"></div>
<div class="a t mono" style="left:1px;top:409px;width:88px;height:16px;line-height:16px;padding-left:2px;color:#828282;"><span class="l">Esc</span>键关闭</div>
<div class="a t mono" style="left:90px;top:409px;width:99px;height:16px;line-height:16px;padding-left:3px;color:#f5a83a;overflow:hidden;width:98px">真</div>
<div class="a" style="left:0;top:425px;width:189px;height:1px;background:#5c5c5c"></div>
<div class="a t mono" style="left:1px;top:426px;width:88px;height:16px;line-height:16px;padding-left:2px;color:#828282;"><span class="l">F1</span>键打开帮助</div>
<div class="a t mono" style="left:90px;top:426px;width:99px;height:16px;line-height:16px;padding-left:3px;color:#f5a83a;overflow:hidden;width:98px">假</div>
<div class="a" style="left:0;top:442px;width:189px;height:1px;background:#5c5c5c"></div>
<div class="a t mono" style="left:1px;top:443px;width:88px;height:16px;line-height:16px;padding-left:14px;color:#828282;">帮助文件名</div>
<div class="a t mono" style="left:90px;top:443px;width:99px;height:16px;line-height:16px;padding-left:3px;color:#f5a83a;overflow:hidden;width:98px"></div>
<div class="a" style="left:0;top:459px;width:189px;height:1px;background:#5c5c5c"></div>
<div class="a t mono" style="left:1px;top:460px;width:88px;height:16px;line-height:16px;padding-left:14px;color:#828282;">帮助标志值</div>
<div class="a t mono" style="left:90px;top:460px;width:99px;height:16px;line-height:16px;padding-left:3px;color:#f5a83a;overflow:hidden;width:98px"><span class="l">0</span></div>
<div class="a" style="left:0;top:0;width:1px;height:471px;background:#5c5c5c"></div>
<div class="a" style="left:89px;top:0;width:1px;height:471px;background:#5c5c5c"></div>
</div>
<div class="a " style="left:206px;top:150px;width:17px;height:470px;background:linear-gradient(to right,#e4e4e4,#f4f4f4 40%,#fff)"></div>
<svg style="left:211px;top:157px" width="8" height="5" viewBox="0 0 8 5"><path d="M0 4.500l4-4.500 4 4.500z" fill="#606060"/></svg>
<svg style="left:211px;top:608px" width="8" height="5" viewBox="0 0 8 5"><path d="M0 0h8l-4 4.500z" fill="#606060"/></svg>
<div class="a " style="left:208px;top:170px;width:15px;height:14px;border:1px solid #979797;border-radius:2px;background:linear-gradient(to right,#f4f4f4,#dcdcdc 50%,#cfcfcf)"></div>
<div class="a sunken2" style="left:16px;top:625px;width:209px;height:18px;background:#fff"></div>
<div class="a raised2" style="left:207px;top:627px;width:16px;height:14px;"></div>
<svg style="left:211px;top:632px" width="8" height="5" viewBox="0 0 8 5"><path d="M0 0h8l-4 4.500z" fill="#000"/></svg>
<div class="a t ss" style="left:20px;top:628px;">在此处选择加入事件处理子程序</div>
<div class="a " style="left:15px;top:647px;width:68px;height:18px;border:1px solid;border-color:transparent #696969 #696969 #fff;box-shadow:inset -1px -1px 0 #a0a0a0;border-radius:0 0 3px 3px;background:#f0f0f0;border-top:none"></div>
<div class="a " style="left:85px;top:647px;width:56px;height:18px;border:1px solid;border-color:transparent #696969 #696969 #fff;box-shadow:inset -1px -1px 0 #a0a0a0;border-radius:0 0 3px 3px;background:#f0f0f0;border-top:none"></div>
<div class="a " style="left:141px;top:646px;width:61px;height:21px;border:1px solid;border-color:transparent #696969 #696969 #fff;box-shadow:inset -1px -1px 0 #a0a0a0;border-radius:0 0 3px 3px;background:#f0f0f0;border-top:none"></div>
<div class="a " style="left:142px;top:645px;width:59px;height:3px;background:#f0f0f0"></div>
<svg style="left:21px;top:648px" width="17" height="14" viewBox="0 0 17 14"><path d="M1 6l8-4.500 7 3-8 4.500zM1 8l7 3 8-4.500M1 10l7 3 8-4.500" fill="#fff" stroke="#000" stroke-width="1"/></svg>
<svg style="left:90px;top:650px" width="16" height="12" viewBox="0 0 16 12"><rect x="0.500" y="0.500" width="8" height="11" fill="#fff" stroke="#000"/><path d="M2 3h5M2 5.500h5M2 8h5M11 3l2 0M11 3v2M11 3l3 3" stroke="#000" fill="none"/></svg>
<svg style="left:148px;top:651px" width="17" height="15" viewBox="0 0 17 15"><path d="M1.500 7l4-3.500h5v3.500" fill="#fff" stroke="#000"/><rect x="1.500" y="7" width="9" height="7" fill="#fff" stroke="#000"/><path d="M3 9.500h6M3 11.500h6" stroke="#000"/><path d="M10 5l3-3" stroke="#000"/><rect x="12" y="0" width="2.500" height="5" fill="#00a"/></svg>
<div class="a t ss" style="left:41px;top:648px;">支持库</div>
<div class="a t ss" style="left:112px;top:648px;">程序</div>
<div class="a t ss" style="left:169px;top:651px;">属性</div>
<div class="a " style="left:8px;top:667px;width:225px;height:1px;background:#a0a0a0"></div>
<div class="a " style="left:1198px;top:667px;width:131px;height:1px;background:#a0a0a0"></div>
<div class="a " style="left:8px;top:668px;width:1321px;height:1px;background:#fff"></div>
<div class="a " style="left:8px;top:672px;width:1321px;height:1px;background:#a0a0a0"></div>
<div class="a " style="left:8px;top:673px;width:1321px;height:1px;background:#fafafa"></div>
<div class="a " style="left:237px;top:105px;width:961px;height:542px;background:#fff"></div>
<div class="a " style="left:237px;top:106px;width:1px;height:541px;background:#a0a0a0"></div>
<div class="a " style="left:238px;top:106px;width:958px;height:539px;background:#333;border-top:1px solid #696969;border-left:1px solid #696969"></div>
<div class="a " style="left:237px;top:104px;width:961px;height:1px;background:#a0a0a0"></div>
<div class="a " style="left:242px;top:109px;width:7px;height:7px;border:1px solid #fff;background:#333"></div>
<div class="a " style="left:372px;top:109px;width:7px;height:7px;border:1px solid #fff;background:#333"></div>
<div class="a " style="left:503px;top:109px;width:7px;height:7px;border:1px solid #fff;background:#333"></div>
<div class="a " style="left:242px;top:249px;width:7px;height:7px;border:1px solid #fff;background:#333"></div>
<div class="a " style="left:503px;top:249px;width:7px;height:7px;border:1px solid #fff;background:#000080"></div>
<div class="a " style="left:242px;top:390px;width:7px;height:7px;border:1px solid #fff;background:#333"></div>
<div class="a " style="left:372px;top:390px;width:7px;height:7px;border:1px solid #fff;background:#000080"></div>
<div class="a " style="left:503px;top:390px;width:7px;height:7px;border:1px solid #fff;background:#000080"></div>
<div class="a " style="left:250px;top:117px;width:252px;height:272px;border-radius:6px 6px 0 0;background:linear-gradient(to bottom,#dfe9f5 0,#a9c3e0 2px,#b4cce6 12px,#bdd3ea 24px);border:1px solid #46c3f0;border-top-color:#e8f0f8"></div>
<div class="a t ui" style="left:256px;top:122px;font-size:12px;line-height:16px;height:16px;letter-spacing:0.25px">酒入辅助网 - Www.2Fzw.Cn</div>
<div class="a " style="left:467px;top:121px;width:31px;height:17px;border:1px solid #5c2a22;border-radius:3px;background:linear-gradient(to bottom,#e9b0a2 0,#d5715c 45%,#c03a22 50%,#d0664a 100%);box-shadow:inset 0 0 0 1px rgba(255,255,255,.45)"></div>
<svg style="left:477px;top:125px" width="12" height="9" viewBox="0 0 12 9"><path d="M0.500 0.500h3l2 2.500 2-2.500h3l-3.500 4 3.500 4h-3l-2-2.500-2 2.500h-3l3.500-4z" fill="#fff" stroke="#5a4a4a" stroke-width="0.800"/></svg>
<div class="a " style="left:251px;top:141px;width:250px;height:247px;background:#f0f0f0"></div>
<div class="a " style="left:251px;top:141px;width:248px;height:246px;background-color:#f0f0f0;background-image:radial-gradient(circle at 1.5px 0.5px,#000 0,#000 0.55px,transparent 0.9px);background-size:8px 8px;background-position:0px 0px"></div>
<div class="a " style="left:268px;top:165px;width:64px;height:33px;background:#fff"></div>
<div class="a t mono" style="left:268px;top:175px;">延迟开枪<span class="l">:</span></div>
<div class="a " style="left:332px;top:171px;width:96px;height:23px;background:#fff;border:1px solid;border-color:#696969 #e8e8e8 #e8e8e8 #696969;box-shadow:inset 1px 1px 0 #a0a0a0"></div>
<div class="a t mono" style="left:333px;top:176px;"><span class="l">850</span></div>
<div class="a " style="left:438px;top:166px;width:32px;height:32px;background:#fff"></div>
<div class="a t mono" style="left:438px;top:175px;">毫秒</div>
<div class="a " style="left:268px;top:203px;width:72px;height:24px;background:#fff"></div>
<div class="a t mono" style="left:268px;top:209px;">开枪后切换<span class="l">:</span></div>
<div class="a " style="left:340px;top:207px;width:127px;height:19px;background:#fff;border:1px solid;border-color:#696969 #e8e8e8 #e8e8e8 #696969;box-shadow:inset 1px 1px 0 #a0a0a0"></div>
<div class="a raised2" style="left:450px;top:209px;width:15px;height:15px;"></div>
<svg style="left:454px;top:215px" width="7" height="4" viewBox="0 0 7 4"><path d="M0 0h7l-3.500 4z" fill="#000"/></svg>
<div class="a t mono" style="left:344px;top:210px;">小刀</div>
<div class="a " style="left:268px;top:254px;width:76px;height:23px;background:#f0f0f0"></div>
<div class="a " style="left:364px;top:254px;width:76px;height:22px;background:#f0f0f0"></div>
<div class="a " style="left:268px;top:261px;width:13px;height:13px;background:#fff;border:1px solid;border-color:#808080 #fff #fff #808080;box-shadow:inset 1px 1px 0 #404040"></div>
<svg style="left:271px;top:264px" width="8" height="8" viewBox="0 0 8 8"><path d="M0.500 3l2.500 2.500 4-4.500" fill="none" stroke="#000" stroke-width="1.800"/></svg>
<div class="a t mono" style="left:286px;top:261px;">一键瞬狙</div>
<div class="a " style="left:364px;top:259px;width:13px;height:13px;background:#fff;border:1px solid;border-color:#808080 #fff #fff #808080;box-shadow:inset 1px 1px 0 #404040"></div>
<svg style="left:367px;top:262px" width="8" height="8" viewBox="0 0 8 8"><path d="M0.500 3l2.500 2.500 4-4.500" fill="none" stroke="#000" stroke-width="1.800"/></svg>
<div class="a t mono" style="left:382px;top:259px;">一键跳箱</div>
<div class="a " style="left:268px;top:309px;width:216px;height:79px;background:#fff"></div>
<div class="a mono" style="left:268px;top:310px;width:216px;line-height:12px;white-space:nowrap"><div style="height:12px;line-height:12px">说明：开源学习，给小白参考。已实现基</div><div style="height:12px;line-height:12px">本功能，自行完善！会点易语言基础的都</div><div style="height:12px;line-height:12px">应该看的懂！</div><div style="height:12px;line-height:12px"></div><div style="height:12px;line-height:12px">注意：支持<span class="l">1024X768</span>分辨率<span class="l">(</span>窗口<span class="l">/</span>全屏<span class="l">)</span></div></div>
<div class="a " style="left:549px;top:128px;width:250px;height:274px;background:#fff"></div>
<div class="a t ui" style="left:559px;top:136px;font-weight:bold;font-size:12px;line-height:16px;height:16px;letter-spacing:1.1px">酒入辅助网 - Www.2Fzw.Cn</div>
<svg style="left:776px;top:138px" width="12" height="12" viewBox="0 0 12 12"><path d="M1.500 1.500l9 9M10.500 1.500l-9 9" stroke="#808080" stroke-width="2"/></svg>
<div class="a t mono" style="left:566px;top:188px;">延迟开枪<span class="l">:</span></div>
<div class="a " style="left:630px;top:185px;width:97px;height:24px;background:#fff;border:1px solid #dcdcdc"></div>
<div class="a t mono" style="left:632px;top:190px;"><span class="l">350</span></div>
<div class="a t mono" style="left:736px;top:188px;">毫秒</div>
<div class="a t mono" style="left:566px;top:222px;">开枪后切换<span class="l">:</span></div>
<div class="a " style="left:638px;top:221px;width:128px;height:20px;background:#fff;border:1px solid #dcdcdc"></div>
<div class="a " style="left:641px;top:224px;width:105px;height:14px;background:linear-gradient(to bottom,#f2f2f2,#d6d6d6)"></div>
<div class="a t mono" style="left:644px;top:224px;">小刀</div>
<svg style="left:753px;top:228px" width="10" height="6" viewBox="0 0 10 6"><path d="M0.500 0.500l4.500 4.500 4.500-4.500" fill="none" stroke="#606060" stroke-width="1.200"/></svg>
<svg style="left:567px;top:274px" width="15" height="15" viewBox="0 0 15 15"><circle cx="7.500" cy="7.500" r="6.500" fill="#fff" stroke="#909090" stroke-width="1.200"/><path d="M4 7.500l2.500 2.500 4.500-5" fill="none" stroke="#707070" stroke-width="1.500"/></svg>
<div class="a t mono" style="left:584px;top:276px;">一键瞬狙</div>
<svg style="left:663px;top:272px" width="15" height="15" viewBox="0 0 15 15"><circle cx="7.500" cy="7.500" r="6.500" fill="#fff" stroke="#909090" stroke-width="1.200"/><path d="M4 7.500l2.500 2.500 4.500-5" fill="none" stroke="#707070" stroke-width="1.500"/></svg>
<div class="a t mono" style="left:680px;top:274px;">一键跳箱</div>
<div class="a mono" style="left:566px;top:323px;width:220px;line-height:12px;white-space:nowrap"><div style="height:12px;line-height:12px">说明：开源学习，给小白参考。已实现基</div><div style="height:12px;line-height:12px">本功能，自行完善！会点易语言基础的都</div><div style="height:12px;line-height:12px">应该看的懂！</div><div style="height:12px;line-height:12px"></div><div style="height:12px;line-height:12px">注意：支持<span class="l">1024X768</span>分辨率<span class="l">(</span>窗口<span class="l">/</span>全屏<span class="l">)</span></div></div>
<div class="a " style="left:238px;top:648px;width:958px;height:1px;background:#808080"></div>
<svg style="left:237px;top:648px" width="470" height="21" viewBox="0 0 470 21"><path d="M2.5 0.500L11.5 18.500H41.5L50.5 0.500" fill="#f0f0f0" stroke="#000" stroke-width="1"/><path d="M41.5 0.500L50.5 18.500H155.5L164.5 0.500" fill="#f0f0f0" stroke="#000" stroke-width="1"/><path d="M154.5 0.500L163.5 18.500H285.5L294.5 0.500" fill="#f0f0f0" stroke="#000" stroke-width="1"/><path d="M285.5 0.500L294.5 18.500H370.5L379.5 0.500" fill="#f0f0f0" stroke="#000" stroke-width="1"/><path d="M370.5 0.500L379.5 18.500H442.5L451.5 0.500" fill="#fff" stroke="#000" stroke-width="1"/><path d="M1 0.500H959" stroke="#808080" stroke-width="1"/><path d="M2 0.500H371" stroke="#000" stroke-width="1"/></svg>
<div class="a t mono" style="left:251px;top:651px;color:#000;">模块</div>
<div class="a t mono" style="left:295px;top:651px;color:#808000;"><span class="l">[Dll</span>命令定义表<span class="l">]</span></div>
<div class="a t mono" style="left:409px;top:651px;color:#808000;"><span class="l">[</span>自定义数据类型表<span class="l">]</span></div>
<div class="a t mono" style="left:536px;top:651px;color:#000;">窗口程序集<span class="l">1</span></div>
<div class="a t ui" style="left:618px;top:650px;color:#000080;font-weight:bold;font-size:12px;line-height:16px;height:16px;letter-spacing:0.3px"><span style="letter-spacing:-1px">_</span>启动窗口</div>
<div class="a " style="left:1201px;top:106px;width:1px;height:563px;background:#a0a0a0"></div>
<div class="a " style="left:1202px;top:106px;width:1px;height:563px;background:#fff"></div>
<div class="a " style="left:1202px;top:113px;width:78px;height:1px;background:#fff"></div>
<div class="a " style="left:1202px;top:115px;width:78px;height:1px;background:#a0a0a0"></div>
<div class="a " style="left:1279px;top:113px;width:1px;height:3px;background:#a0a0a0"></div>
<div class="a raised" style="left:1284px;top:109px;width:11px;height:11px;"></div>
<svg style="left:1284px;top:109px" width="11" height="11" viewBox="0 0 11 11"><path d="M2.500 3.500h6M2.500 5.500h4M2.500 7.500h6" stroke="#000"/></svg>
<div class="a raised" style="left:1297px;top:109px;width:11px;height:11px;"></div>
<svg style="left:1297px;top:109px" width="11" height="11" viewBox="0 0 11 11"><rect x="2.500" y="2.500" width="5" height="5" fill="none" stroke="#000"/><rect x="2" y="2" width="6" height="2" fill="#000"/></svg>
<div class="a raised" style="left:1310px;top:109px;width:11px;height:11px;"></div>
<svg style="left:1310px;top:109px" width="11" height="11" viewBox="0 0 11 11"><path d="M2.500 3l5 5M7.500 3l-5 5" stroke="#000" stroke-width="1.800"/></svg>
<div class="a raised" style="left:1207px;top:127px;width:116px;height:20px;"></div>
<div class="a t mono" style="left:1207px;top:129px;width:116px;text-align:center">基本组件</div>
<div class="a " style="left:1331px;top:152px;width:4px;height:82px;background:linear-gradient(to bottom,#d2cbb2 0,#dcdcd4 14px,#7aa4cc 22px,#6e9cc8 30px,#c4d6e6 36px,#f4f4f0 42px,#f0eee6 74px,#d2cbb2 82px)"></div>
<div class="a raised" style="left:1207px;top:602px;width:116px;height:20px;"></div>
<div class="a t mono" style="left:1207px;top:605px;width:116px;text-align:center">扩展组件<span class="l">1</span></div>
<div class="a raised" style="left:1207px;top:623px;width:116px;height:20px;"></div>
<div class="a t mono" style="left:1207px;top:626px;width:116px;text-align:center">扩展组件<span class="l">2</span></div>
<div class="a raised" style="left:1207px;top:644px;width:116px;height:20px;"></div>
<div class="a t mono" style="left:1207px;top:647px;width:116px;text-align:center">外部组件</div>
<div class="a " style="left:1207px;top:155px;width:28px;height:28px;border:1px solid;border-color:#000 #fff #fff #000;background:#f4f4f4"></div>
<svg style="left:1211px;top:159px" width="20" height="20" viewBox="0 0 20 20"><path d="M5 1v14l3.500-3.500 2.500 6 2-1-2.500-5.500h5z" fill="#000"/></svg>
<svg style="left:1240px;top:159px" width="20" height="20" viewBox="0 0 20 20"><rect x="0.500" y="2.500" width="19" height="14" fill="#fff" stroke="#808080"/><path d="M0.500 16.500v-14h19" fill="none" stroke="#404040"/><text x="3.500" y="13.500" font-family="Liberation Sans,sans-serif" font-size="11" fill="#000" letter-spacing="1.500">AI</text></svg>
<svg style="left:1269px;top:159px" width="20" height="20" viewBox="0 0 20 20"><rect x="0.500" y="2.500" width="19" height="15" fill="#7fe8f0" stroke="#000"/><circle cx="5" cy="6.500" r="2.200" fill="#ff0" stroke="#000" stroke-width="0.600"/><path d="M1 17l3-4 2 2z" fill="#d04040"/><path d="M13 7l3-3 3 4v5z" fill="#30e030"/><path d="M4 17l7.500-9.500 7.500 9.500z" fill="#e0e000" stroke="#606000" stroke-width="0.600"/></svg>
<svg style="left:1298px;top:159px" width="20" height="20" viewBox="0 0 20 20"><path d="M2 3.500c2-2 6-2 8 0v7l-4 3-4-3z" fill="#40e040" stroke="#208020"/><rect x="9.500" y="5.500" width="7" height="7" fill="#ffa880" stroke="#c06040"/><circle cx="9" cy="13.500" r="4" fill="#ffff40" stroke="#a0a000"/></svg>
<svg style="left:1211px;top:188px" width="20" height="20" viewBox="0 0 20 20"><path d="M1.500 5.500h11v13h-11z" fill="#fff" stroke="#000"/><text x="3.500" y="16.500" font-family="Liberation Sans,sans-serif" font-size="10" font-weight="bold" fill="#0000c0">A</text><path d="M8 13l8-10 2 1.500-8 10-2.500 1z" fill="#f0d060" stroke="#000" stroke-width="0.800"/><circle cx="17.500" cy="2.500" r="1.500" fill="#e00000"/></svg>
<svg style="left:1240px;top:188px" width="20" height="20" viewBox="0 0 20 20"><path d="M5 3.500h-4.500v14h17v-14h-4.500" fill="none" stroke="#808080"/><text x="5.500" y="6.500" font-family="Liberation Sans,sans-serif" font-size="7" font-weight="bold" fill="#000">CN</text></svg>
<svg style="left:1269px;top:188px" width="20" height="20" viewBox="0 0 20 20"><text x="0" y="17" font-family="Liberation Sans,Noto Sans CJK SC,sans-serif" font-size="18" fill="#000">字</text></svg>
<svg style="left:1298px;top:188px" width="20" height="20" viewBox="0 0 20 20"><rect x="1.500" y="4.500" width="17" height="11" fill="#f0f0f0" stroke="none"/><path d="M1.500 15.500h17v-11" fill="none" stroke="#000" stroke-width="1.100"/><path d="M1.500 15v-10.500h16.500" fill="none" stroke="#fff"/></svg>
<svg style="left:1211px;top:217px" width="20" height="20" viewBox="0 0 20 20"><rect x="3.500" y="4.500" width="12" height="11" fill="#fff" stroke="#808080"/><path d="M3.500 15.500v-11h12" fill="none" stroke="#404040"/><path d="M6 9.500l2.500 3 5-6" fill="none" stroke="#0000c0" stroke-width="2"/></svg>
<svg style="left:1240px;top:217px" width="20" height="20" viewBox="0 0 20 20"><path d="M13 5.500a5 5 0 1 0 0 9" fill="#fff" stroke="#808080" stroke-width="1.200"/><circle cx="10.500" cy="10" r="2" fill="#0000c0"/></svg>
<svg style="left:1269px;top:217px" width="20" height="20" viewBox="0 0 20 20"><rect x="1.500" y="2.500" width="17" height="4" fill="#fff" stroke="#000"/><rect x="3.500" y="6.500" width="15" height="11" fill="#fff" stroke="#000" stroke-width="1.100"/><path d="M14.500 2.500v15" stroke="#000"/><path d="M4 4.500h8M6 9h6M6 11.500h5M6 14h6" stroke="#0000c0" stroke-width="1.200"/><path d="M15.500 9.500l1-1.500 1 1.500zM15.500 14.500l1 1.500 1-1.500z" fill="#000"/></svg>
<svg style="left:1298px;top:217px" width="20" height="20" viewBox="0 0 20 20"><rect x="1.500" y="2.500" width="17" height="15" fill="#fff" stroke="#000" stroke-width="1.100"/><path d="M13.500 2.500v15" stroke="#000"/><path d="M3.500 5.500h7M3.500 8.500h5M3.500 11.500h7M3.500 14.500h6" stroke="#000" stroke-width="1"/><path d="M14.800 6.500l1.200-2 1.200 2zM14.800 13.500l1.200 2 1.200-2z" fill="#0000c0"/></svg>
<svg style="left:1211px;top:246px" width="20" height="20" viewBox="0 0 20 20"><rect x="1.500" y="2.500" width="17" height="15" fill="#fff" stroke="#000" stroke-width="1.100"/><path d="M14 2.500v15" stroke="#000"/><rect x="3.500" y="4.500" width="2.500" height="2.500" fill="none" stroke="#000"/><rect x="3.500" y="8.500" width="2.500" height="2.500" fill="none" stroke="#000"/><rect x="3.500" y="12.500" width="2.500" height="2.500" fill="none" stroke="#000"/><path d="M7.500 6h5M7.500 10h5M7.500 14h5" stroke="#000"/><path d="M15 7l1.200-2 1.200 2zM15 13l1.200 2 1.200-2z" fill="#0000c0"/></svg>
<svg style="left:1240px;top:246px" width="20" height="20" viewBox="0 0 20 20"><rect x="0.500" y="6.500" width="19" height="7" fill="#fff" stroke="#a0a0a0"/><path d="M5 7v6M9 7v6M11 7v6M15 7v6" stroke="#000"/><path d="M4 8l-2.500 2 2.500 2zM16 8l2.500 2-2.500 2z" fill="#000"/></svg>
<svg style="left:1269px;top:246px" width="20" height="20" viewBox="0 0 20 20"><rect x="6.500" y="-0.500" width="7" height="21" fill="#fff" stroke="#c0c0c0"/><path d="M7 6.500h6M7 10.500h6M7 14.500h6" stroke="#000"/><path d="M8 4.500l2-3 2 3zM8 16.500l2 3 2-3z" fill="#000"/><path d="M13.500 0v6.500M13.500 14.500v6" stroke="#000"/></svg>
<svg style="left:1298px;top:246px" width="20" height="20" viewBox="0 0 20 20"><rect x="0.500" y="6.500" width="19" height="7" fill="#fff" stroke="#c0c0c0"/><path d="M3 8v4M6 8v4M9 8v4M12 8v4" stroke="#0000c0" stroke-width="2"/></svg>
<svg style="left:1211px;top:275px" width="20" height="20" viewBox="0 0 20 20"><path d="M1 9.500h18" stroke="#000" stroke-width="1.100"/><path d="M3 5l-1.500 4h3z" fill="#000"/><path d="M2 14v2M5 14v2M8 14v2M11 14v2M14 14v2M17 14v2" stroke="#000"/></svg>
<svg style="left:1240px;top:275px" width="20" height="20" viewBox="0 0 20 20"><path d="M1.500 16.500h17v-11h-6v-2h-5v2h-6z" fill="#fff" stroke="#a0a0a0"/><path d="M1.500 16.500h17v-11" fill="none" stroke="#000" stroke-width="1.100"/><path d="M4 3.500h2M8 3.500h2" stroke="#0000c0"/></svg>
<svg style="left:1269px;top:275px" width="20" height="20" viewBox="0 0 20 20"><path d="M5.500 1.500h7l3 3v14h-10z" fill="#fff" stroke="#8090c0"/><path d="M4.500 1v18M16 5v14" stroke="#30509c" stroke-width="2.400" stroke-dasharray="1.500 1"/><path d="M3.500 1v18M17.500 5v14" stroke="#30509c" stroke-width="0.800"/><text x="8" y="15" font-family="Liberation Sans,sans-serif" font-size="8" font-weight="bold" fill="#2040a0">1</text></svg>
<svg style="left:1298px;top:275px" width="20" height="20" viewBox="0 0 20 20"><rect x="1.500" y="2.500" width="17" height="15" fill="#fff" stroke="#000" stroke-width="1.100"/><path d="M1.500 6h17" stroke="#000" stroke-width="1.100"/><circle cx="10" cy="12" r="3.500" fill="#fff" stroke="#000"/><path d="M7 15l6-6" stroke="#000"/><path d="M14 4h2" stroke="#000"/></svg>
<svg style="left:1211px;top:304px" width="20" height="20" viewBox="0 0 20 20"><rect x="0.500" y="2.500" width="19" height="15" fill="#fff" stroke="#808080"/><path d="M0.500 5.500h19" stroke="#808080"/><path d="M3 8h2M7 8h2M11 8h2M15 8h2M7 11h2M15 11h2M3 14h2M11 14h2" stroke="#0000c0" stroke-width="1.100"/><path d="M3 11h2M11 11h2M7 14h2M15 14h2" stroke="#e00000" stroke-width="1.100"/></svg>
<svg style="left:1240px;top:304px" width="20" height="20" viewBox="0 0 20 20"><rect x="1.500" y="5.500" width="17" height="10" rx="1.500" fill="#fff" stroke="#000" stroke-width="1.100"/><path d="M4 8.500h8" stroke="#00a0a0" stroke-width="1.100"/><path d="M4 12h11" stroke="#a0a0a0"/></svg>
<svg style="left:1269px;top:304px" width="20" height="20" viewBox="0 0 20 20"><path d="M1.500 5.500l2-2h5l2 2h8v11h-17z" fill="#f0e040" stroke="#908000"/><text x="3" y="14.500" font-family="Liberation Sans,sans-serif" font-size="7.500" font-weight="bold" fill="#605000">DIR</text></svg>
<svg style="left:1298px;top:304px" width="20" height="20" viewBox="0 0 20 20"><path d="M3.500 1.500h9l4 4v13h-13z" fill="#fff" stroke="#000"/><path d="M6 6h5M6 9h8M6 12h8M6 15h8" stroke="#0000c0" stroke-width="1.100"/></svg>
<svg style="left:1211px;top:333px" width="20" height="20" viewBox="0 0 20 20"><rect x="0.500" y="1.500" width="10" height="3.500" fill="#0000c0"/><path d="M7 2.500h3l-1.500 2z" fill="#fff"/><rect x="1.500" y="5.500" width="17" height="13" fill="#fff" stroke="#808080"/><path d="M3 8h3" stroke="#e00000" stroke-width="2"/><path d="M7 8h3" stroke="#00c000" stroke-width="2"/><path d="M11 8h3" stroke="#e0e000" stroke-width="2"/><path d="M15 8h2" stroke="#0000e0" stroke-width="2"/><path d="M3 12h3" stroke="#c000c0" stroke-width="2"/><path d="M7 12h3" stroke="#00c0c0" stroke-width="2"/><path d="M11 12h3" stroke="#e08000" stroke-width="2"/><path d="M15 12h2" stroke="#000" stroke-width="2"/><path d="M3 16h3" stroke="#e00000" stroke-width="2"/><path d="M7 16h3" stroke="#0000e0" stroke-width="2"/><path d="M11 16h3" stroke="#c000c0" stroke-width="2"/></svg>
<svg style="left:1240px;top:333px" width="20" height="20" viewBox="0 0 20 20"><circle cx="8" cy="6" r="5" fill="#2060e0" stroke="#103080"/><path d="M5 4c2-2 4 0 5-1s1 3-1 4-3 0-4-3z" fill="#30c030"/><g transform="translate(10,9)"><g fill="#c0c0c0" stroke="#000" stroke-width="0.800"><rect x="0.500" y="0.500" width="8.500" height="6.500" fill="#d0d0d0"/><rect x="2" y="1.800" width="5.500" height="3.800" fill="#909090" stroke="none"/><path d="M-0.500 9.500h10.500l-1-2.500h-8.500z" fill="#e8e8e8"/></g></g><path d="M2 17v-4h3M2 11l-2 2.500h4z" fill="none" stroke="#0000c0" stroke-width="1.200"/></svg>
<svg style="left:1269px;top:333px" width="20" height="20" viewBox="0 0 20 20"><path d="M2 3.500h9v13h-9l-1.500-6.500z" fill="#fff" stroke="#a0a0a0"/><path d="M11.500 2v16" stroke="#000" stroke-width="1.100"/><rect x="12.500" y="2.500" width="6" height="15" fill="#f0f0f0" stroke="#808080"/><path d="M12.500 10h6" stroke="#808080"/><path d="M14 7.500l1.500-2.500 1.500 2.500z" fill="#0000c0"/><path d="M14 12.500l1.500 2.500 1.500-2.500z" fill="#000"/></svg>
<svg style="left:1298px;top:333px" width="20" height="20" viewBox="0 0 20 20"><rect x="1.500" y="2.500" width="17" height="15" fill="#fff" stroke="#000080" stroke-width="1.100"/><rect x="2" y="3" width="16" height="3.500" fill="#000080"/><rect x="4.500" y="9.500" width="3.500" height="5" fill="none" stroke="#0000c0" stroke-width="1.100"/><rect x="10.500" y="9.500" width="3.500" height="5" fill="none" stroke="#0000c0" stroke-width="1.100"/><path d="M16 9v2" stroke="#0000c0"/></svg>
<svg style="left:1211px;top:362px" width="20" height="20" viewBox="0 0 20 20"><circle cx="10" cy="11.500" r="7" fill="#fff" stroke="#000" stroke-width="1.200"/><circle cx="10" cy="11.500" r="5" fill="none" stroke="#808080" stroke-dasharray="1 1.500"/><path d="M10 11.500l-3-3M10 11.500l2.500 2.500" stroke="#000"/><path d="M8 2.500h4M10 2.500v2" stroke="#000" stroke-width="1.100"/><path d="M9.500 0.500h1" stroke="#0000c0" stroke-width="1.100"/></svg>
<svg style="left:1240px;top:362px" width="20" height="20" viewBox="0 0 20 20"><path d="M5 3.500l8-2 3 3-8 2.500z" fill="#fff" stroke="#000"/><path d="M2 9l6-2.500 9 0.500v6l-6 4-9-3z" fill="#e0e0e0" stroke="#000" stroke-width="1.200"/><path d="M2 9l8 2.500 7-4.500M10 11.500v5.500" fill="none" stroke="#000"/><path d="M11 14l4-2.500" stroke="#e00000" stroke-width="1.200"/><path d="M5 11.500l3 1" stroke="#0000c0" stroke-width="1.200"/></svg>
<svg style="left:1269px;top:362px" width="20" height="20" viewBox="0 0 20 20"><g transform="translate(-1,0)"><g fill="#c0c0c0" stroke="#000" stroke-width="0.800"><rect x="0.500" y="0.500" width="8.500" height="6.500" fill="#d0d0d0"/><rect x="2" y="1.800" width="5.500" height="3.800" fill="#909090" stroke="none"/><path d="M-0.500 9.500h10.500l-1-2.500h-8.500z" fill="#e8e8e8"/></g></g><g transform="translate(11,11)"><g fill="#c0c0c0" stroke="#000" stroke-width="0.800"><rect x="0.500" y="0.500" width="8.500" height="6.500" fill="#d0d0d0"/><rect x="2" y="1.800" width="5.500" height="3.800" fill="#909090" stroke="none"/><path d="M-0.500 9.500h10.500l-1-2.500h-8.500z" fill="#e8e8e8"/></g></g><path d="M17 8v-4.500h-5M14 1.500l-2 2 2 2" fill="none" stroke="#0000c0" stroke-width="1.300"/><path d="M2 10v5.500h5M5 13.500l2 2-2 2" fill="none" stroke="#0000c0" stroke-width="1.300"/></svg>
<svg style="left:1298px;top:362px" width="20" height="20" viewBox="0 0 20 20"><g transform="translate(-1,0)"><g fill="#c0c0c0" stroke="#000" stroke-width="0.800"><rect x="0.500" y="0.500" width="8.500" height="6.500" fill="#d0d0d0"/><rect x="2" y="1.800" width="5.500" height="3.800" fill="#00f" stroke="none"/><path d="M-0.500 9.500h10.500l-1-2.500h-8.500z" fill="#e8e8e8"/></g></g><g transform="translate(10,11)"><g fill="#c0c0c0" stroke="#000" stroke-width="0.800"><rect x="0.500" y="0.500" width="8.500" height="6.500" fill="#d0d0d0"/><rect x="2" y="1.800" width="5.500" height="3.800" fill="#909090" stroke="none"/><path d="M-0.500 9.500h10.500l-1-2.500h-8.500z" fill="#e8e8e8"/></g></g><path d="M2 10v5.500h5M5 13.500l2 2-2 2" fill="none" stroke="#0000c0" stroke-width="1.300"/></svg>
<svg style="left:1211px;top:391px" width="20" height="20" viewBox="0 0 20 20"><g transform="translate(-3,-1)"><g fill="#c0c0c0" stroke="#000" stroke-width="0.800"><rect x="0.500" y="0.500" width="8.500" height="6.500" fill="#d0d0d0"/><rect x="2" y="1.800" width="5.500" height="3.800" fill="#909090" stroke="none"/><path d="M-0.500 9.500h10.500l-1-2.500h-8.500z" fill="#e8e8e8"/></g></g><g transform="translate(9,11)"><g fill="#c0c0c0" stroke="#000" stroke-width="0.800"><rect x="0.500" y="0.500" width="8.500" height="6.500" fill="#d0d0d0"/><rect x="2" y="1.800" width="5.500" height="3.800" fill="#00f" stroke="none"/><path d="M-0.500 9.500h10.500l-1-2.500h-8.500z" fill="#e8e8e8"/></g></g><path d="M0 10v5.500h5M3 13.500l2 2-2 2" fill="none" stroke="#0000c0" stroke-width="1.300"/></svg>
<svg style="left:1240px;top:391px" width="20" height="20" viewBox="0 0 20 20"><path d="M2 3.500h9l-1.500 4h-6z" fill="#e0e0e0" stroke="#808080"/><path d="M3 2.500h7" stroke="#00a0a0" stroke-dasharray="1 1"/><path d="M6.500 7.500c0 6 1 7 7 8" fill="none" stroke="#808080" stroke-width="1.600"/><path d="M14 8h3v-2.500M15.500 7l1.500-1.500 1.500 1.500" fill="none" stroke="#0000c0"/></svg>
<svg style="left:1269px;top:391px" width="20" height="20" viewBox="0 0 20 20"><rect x="1.500" y="2.500" width="17" height="15" fill="#fff" stroke="#000" stroke-width="1.100"/><path d="M1.500 6.500h17M1.500 10.500h17M1.500 14.500h17M6.500 2.500v15M12.500 2.500v15" stroke="#a0a0a0"/><rect x="7.500" y="7.500" width="4" height="3" fill="#fff" stroke="#0000c0" stroke-width="1.200"/></svg>
<svg style="left:1298px;top:391px" width="20" height="20" viewBox="0 0 20 20"><rect x="0.500" y="0.500" width="8.500" height="8" fill="#fff" stroke="#000080" stroke-width="1.200"/><rect x="10.500" y="0.500" width="8.500" height="8" fill="#fff" stroke="#000080" stroke-width="1.200"/><path d="M3 2.500v4M7 2.500l-3 2 3 2zM16.500 2.500v4M12.500 2.500l3 2-3 2z" fill="#000080" stroke="#000080"/><path d="M5 8.500v9h3M5 12.500h3" fill="none" stroke="#000080"/><rect x="8.500" y="10.500" width="10" height="3" fill="#fff" stroke="#000080" stroke-width="1.200"/><rect x="8.500" y="15.500" width="10" height="3" fill="#fff" stroke="#000080" stroke-width="1.200"/></svg>
<svg style="left:1211px;top:420px" width="20" height="20" viewBox="0 0 20 20"><rect x="1.500" y="0.500" width="17" height="3.500" fill="#fff" stroke="#000"/><rect x="4.500" y="5.500" width="14" height="3.500" fill="#fff" stroke="#000"/><path d="M2.500 4v3.500h2" fill="none" stroke="#000"/><path d="M4.500 18v-4.500h3" fill="none" stroke="#000" stroke-width="1.400"/><path d="M4.500 11l-2.500 3h5z" fill="#000"/><path d="M10.500 10.500h5l3 3v6h-8z" fill="#fff" stroke="#000"/><path d="M12.500 14.500h4M12.500 16.500h4" stroke="#808080"/></svg>
<svg style="left:1240px;top:420px" width="20" height="20" viewBox="0 0 20 20"><rect x="1.500" y="0.500" width="17" height="3.500" fill="#fff" stroke="#000"/><rect x="4.500" y="5.500" width="14" height="3.500" fill="#fff" stroke="#000"/><path d="M2.500 4v3.500h2" fill="none" stroke="#000"/><path d="M4.500 18v-4.500h3" fill="none" stroke="#000" stroke-width="1.400"/><path d="M4.500 11l-2.500 3h5z" fill="#000"/><path d="M10.500 12v6c0 2 8 2 8 0v-6" fill="#a8a000" stroke="#000"/><ellipse cx="14.500" cy="12" rx="4" ry="1.800" fill="#e8e040" stroke="#000"/></svg>
<svg style="left:1269px;top:420px" width="20" height="20" viewBox="0 0 20 20"><rect x="1.500" y="2.500" width="17" height="14" fill="#d8e0d8" stroke="#a0a8a0"/><path d="M2 16l4-6 3 3 5-8 4 7" fill="none" stroke="#308030"/><path d="M2 16l5-4 4 2 7-5v7z" fill="#b8c8b8" stroke="#607060" stroke-width="0.600"/><circle cx="5" cy="6" r="1.200" fill="none" stroke="#000" stroke-width="0.800"/></svg>
<svg style="left:1298px;top:420px" width="20" height="20" viewBox="0 0 20 20"><g fill="#909090" stroke="#303030"><path d="M1.500 2v8c0 2 7 2 7 0v-8"/><ellipse cx="5" cy="2" rx="3.500" ry="1.600" fill="#d8d8d8"/><path d="M11.500 3v8c0 2 7 2 7 0v-8"/><ellipse cx="15" cy="3" rx="3.500" ry="1.600" fill="#d8d8d8"/></g><text x="0" y="21" font-family="Liberation Serif,serif" font-size="8" fill="#000" textLength="20" lengthAdjust="spacingAndGlyphs">ODBC</text></svg>
<svg style="left:1211px;top:449px" width="20" height="20" viewBox="0 0 20 20"><rect x="4.500" y="1.500" width="14" height="3" fill="#fff" stroke="#000"/><path d="M2.500 0v3h2" fill="none" stroke="#000"/><path d="M4.500 14v-4.500h3" fill="none" stroke="#000" stroke-width="1.400"/><path d="M4.500 7l-2.500 3h5z" fill="#000"/><path d="M10.500 8v5c0 2 8 2 8 0v-5" fill="#a8a000" stroke="#000"/><ellipse cx="14.500" cy="8" rx="4" ry="1.800" fill="#e8e040" stroke="#000"/><text x="0" y="21.500" font-family="Liberation Serif,serif" font-size="8" fill="#000" textLength="20" lengthAdjust="spacingAndGlyphs">ODBC</text></svg>
<div class="a raised" style="left:12px;top:677px;width:11px;height:11px;"></div>
<svg style="left:12px;top:677px" width="11" height="11" viewBox="0 0 11 11"><path d="M2.500 3l5 5M7.500 3l-5 5" stroke="#000" stroke-width="1.800"/></svg>
<div class="a raised" style="left:12px;top:691px;width:11px;height:11px;"></div>
<svg style="left:12px;top:691px" width="11" height="11" viewBox="0 0 11 11"><rect x="2.500" y="2.500" width="5" height="5" fill="none" stroke="#000"/><rect x="2" y="2" width="6" height="2" fill="#000"/></svg>
<div class="a " style="left:16px;top:706px;width:1px;height:93px;background:#fff"></div>
<div class="a " style="left:17px;top:706px;width:1px;height:93px;background:#a0a0a0"></div>
<div class="a " style="left:26px;top:697px;width:1299px;height:102px;border:1px solid;border-color:#fff #696969 #696969 #fff;border-bottom:none;box-shadow:inset -1px 0 0 #a0a0a0"></div>
<div class="a " style="left:30px;top:702px;width:1292px;height:97px;background:#333;border:1px solid;border-color:#a0a0a0 #fff #fff #a0a0a0;border-bottom:none;box-shadow:inset 1px 1px 0 #696969,inset -1px 0 0 #e8e8e8"></div>
<div class="a mono" style="left:33px;top:705px;color:#fff;font-size:14px;white-space:nowrap"><div style="height:14px;line-height:14px">正在进行名称连接<span class="l" style="letter-spacing:-1.400px">...</span></div><div style="height:14px;line-height:14px">正在统计需要编译的子程序</div><div style="height:14px;line-height:14px">正在编译<span class="l" style="letter-spacing:-1.400px">...</span></div><div style="height:14px;line-height:14px">正在生成主程序入口代码</div><div style="height:14px;line-height:14px">程序代码编译成功</div><div style="height:14px;line-height:14px">正在封装易格式目的代码</div><div style="height:14px;line-height:14px">开始运行被调试程序</div></div>
<div class="a " style="left:1302px;top:704px;width:18px;height:95px;background:linear-gradient(to right,#e8e8e8,#f6f6f6 40%,#fff)"></div>
<svg style="left:1306px;top:711px" width="8" height="5" viewBox="0 0 8 5"><path d="M0 4.500l4-4.500 4 4.500z" fill="#606060"/></svg>
<div class="a " style="left:1303px;top:753px;width:15px;height:50px;border:1px solid #979797;border-radius:2px;background:linear-gradient(to right,#f4f4f4,#dcdcdc 50%,#cfcfcf)"></div>
<div class="a " style="left:1307px;top:783px;width:8px;height:1px;background:#707070"></div>
<div class="a " style="left:1307px;top:786px;width:8px;height:1px;background:#707070"></div>
<div class="a " style="left:1307px;top:789px;width:8px;height:1px;background:#707070"></div>
<div class="a " style="left:1181px;top:795px;width:57px;height:4px;background:#707070"></div>
<div class="a " style="left:29px;top:679px;width:56px;height:18px;border:1px solid;border-color:#fff #696969 transparent #fff;border-bottom:none;box-shadow:inset -1px 0 0 #a0a0a0;border-radius:3px 3px 0 0;background:#f0f0f0"></div>
<div class="a t mono" style="left:56px;top:681px;">提示</div>
<div class="a " style="left:84px;top:676px;width:63px;height:22px;border:1px solid;border-color:#fff #696969 transparent #fff;border-bottom:none;box-shadow:inset -1px 0 0 #a0a0a0;border-radius:3px 3px 0 0;background:#f0f0f0"></div>
<div class="a t mono" style="left:114px;top:679px;">输出</div>
<div class="a " style="left:147px;top:679px;width:67px;height:18px;border:1px solid;border-color:#fff #696969 transparent #fff;border-bottom:none;box-shadow:inset -1px 0 0 #a0a0a0;border-radius:3px 3px 0 0;background:#f0f0f0"></div>
<div class="a t mono" style="left:172px;top:681px;">调用表</div>
<div class="a " style="left:214px;top:679px;width:70px;height:18px;border:1px solid;border-color:#fff #696969 transparent #fff;border-bottom:none;box-shadow:inset -1px 0 0 #a0a0a0;border-radius:3px 3px 0 0;background:#f0f0f0"></div>
<div class="a t mono" style="left:242px;top:681px;">监视表</div>
<div class="a " style="left:284px;top:679px;width:70px;height:18px;border:1px solid;border-color:#fff #696969 transparent #fff;border-bottom:none;box-shadow:inset -1px 0 0 #a0a0a0;border-radius:3px 3px 0 0;background:#f0f0f0"></div>
<div class="a t mono" style="left:311px;top:681px;">变量表</div>
<div class="a " style="left:354px;top:679px;width:64px;height:18px;border:1px solid;border-color:#fff #696969 transparent #fff;border-bottom:none;box-shadow:inset -1px 0 0 #a0a0a0;border-radius:3px 3px 0 0;background:#f0f0f0"></div>
<div class="a t mono" style="left:382px;top:681px;">搜寻<span class="l">1</span></div>
<div class="a " style="left:418px;top:679px;width:64px;height:18px;border:1px solid;border-color:#fff #696969 transparent #fff;border-bottom:none;box-shadow:inset -1px 0 0 #a0a0a0;border-radius:3px 3px 0 0;background:#f0f0f0"></div>
<div class="a t mono" style="left:446px;top:681px;">搜寻<span class="l">2</span></div>
<div class="a " style="left:482px;top:679px;width:82px;height:18px;border:1px solid;border-color:#fff #696969 transparent #fff;border-bottom:none;box-shadow:inset -1px 0 0 #a0a0a0;border-radius:3px 3px 0 0;background:#f0f0f0"></div>
<div class="a t mono" style="left:509px;top:681px;">剪辑历史</div>
<div class="a ui" style="left:37px;top:679px;font-size:17px;font-weight:bold;line-height:18px;color:#f0e000;text-shadow:-1px 0 #000,1px 0 #000,0 -1px #000,0 1px #000">?</div>
<svg style="left:94px;top:679px" width="13" height="14" viewBox="0 0 13 14"><rect x="0.500" y="0.500" width="12" height="13" fill="#fff" stroke="#000"/><rect x="1" y="1" width="11" height="2" fill="#0000c0"/><path d="M3 5.500h7M3 7.500h5M3 9.500h6M3 11.500h4" stroke="#000"/></svg>
<svg style="left:152px;top:683px" width="12" height="12" viewBox="0 0 12 12"><path d="M1.500 0v12M5.500 0v12M9.500 0v12" stroke="#000" stroke-width="1.400"/><path d="M0 3.500h12" stroke="#0000c0" stroke-dasharray="2 1"/><path d="M0 8.500h12" stroke="#000" stroke-dasharray="2 1"/></svg>
<svg style="left:220px;top:680px" width="16" height="15" viewBox="0 0 16 15"><circle cx="6" cy="6" r="5" fill="#fff" stroke="#000" stroke-width="1.400"/><path d="M9.500 9.500l5 5" stroke="#000" stroke-width="2.200"/></svg>
<svg style="left:290px;top:684px" width="16" height="10" viewBox="0 0 16 10"><path d="M4 0.500l3.500 3.500-3.500 4-3.500-4z" fill="#e8e000" stroke="#000"/><path d="M11 0.500l3.500 3.500-3.500 4-3.500-4z" fill="#fff" stroke="#000"/><path d="M7.500 4l3.500 4" stroke="#000"/></svg>
<svg style="left:360px;top:682px" width="17" height="15" viewBox="0 0 17 15"><rect x="0.500" y="0.500" width="11" height="12" fill="#fff" stroke="#000"/><path d="M2 3.500h8M2 5.500h3M2 7.500h3M2 9.500h3M2 11h8" stroke="#000"/><circle cx="8.500" cy="7" r="2.500" fill="#f0f0f0" stroke="#000" stroke-dasharray="1 1"/><path d="M10.500 9.500l4.500 4.500" stroke="#000" stroke-width="2"/></svg>
<svg style="left:424px;top:682px" width="17" height="15" viewBox="0 0 17 15"><rect x="0.500" y="0.500" width="11" height="12" fill="#fff" stroke="#000"/><path d="M2 3.500h8M2 5.500h3M2 7.500h3M2 9.500h3M2 11h8" stroke="#000"/><circle cx="8.500" cy="7" r="2.500" fill="#f0f0f0" stroke="#000" stroke-dasharray="1 1"/><path d="M10.500 9.500l4.500 4.500" stroke="#000" stroke-width="2"/></svg>
<svg style="left:491px;top:683px" width="12" height="13" viewBox="0 0 12 13"><rect x="0.500" y="0.500" width="10" height="12" fill="#fff" stroke="#000"/><path d="M3 3.500h5M3 5.500h5M3 7.500h5M3 9.500h3" stroke="#000"/></svg>
</body></html>
